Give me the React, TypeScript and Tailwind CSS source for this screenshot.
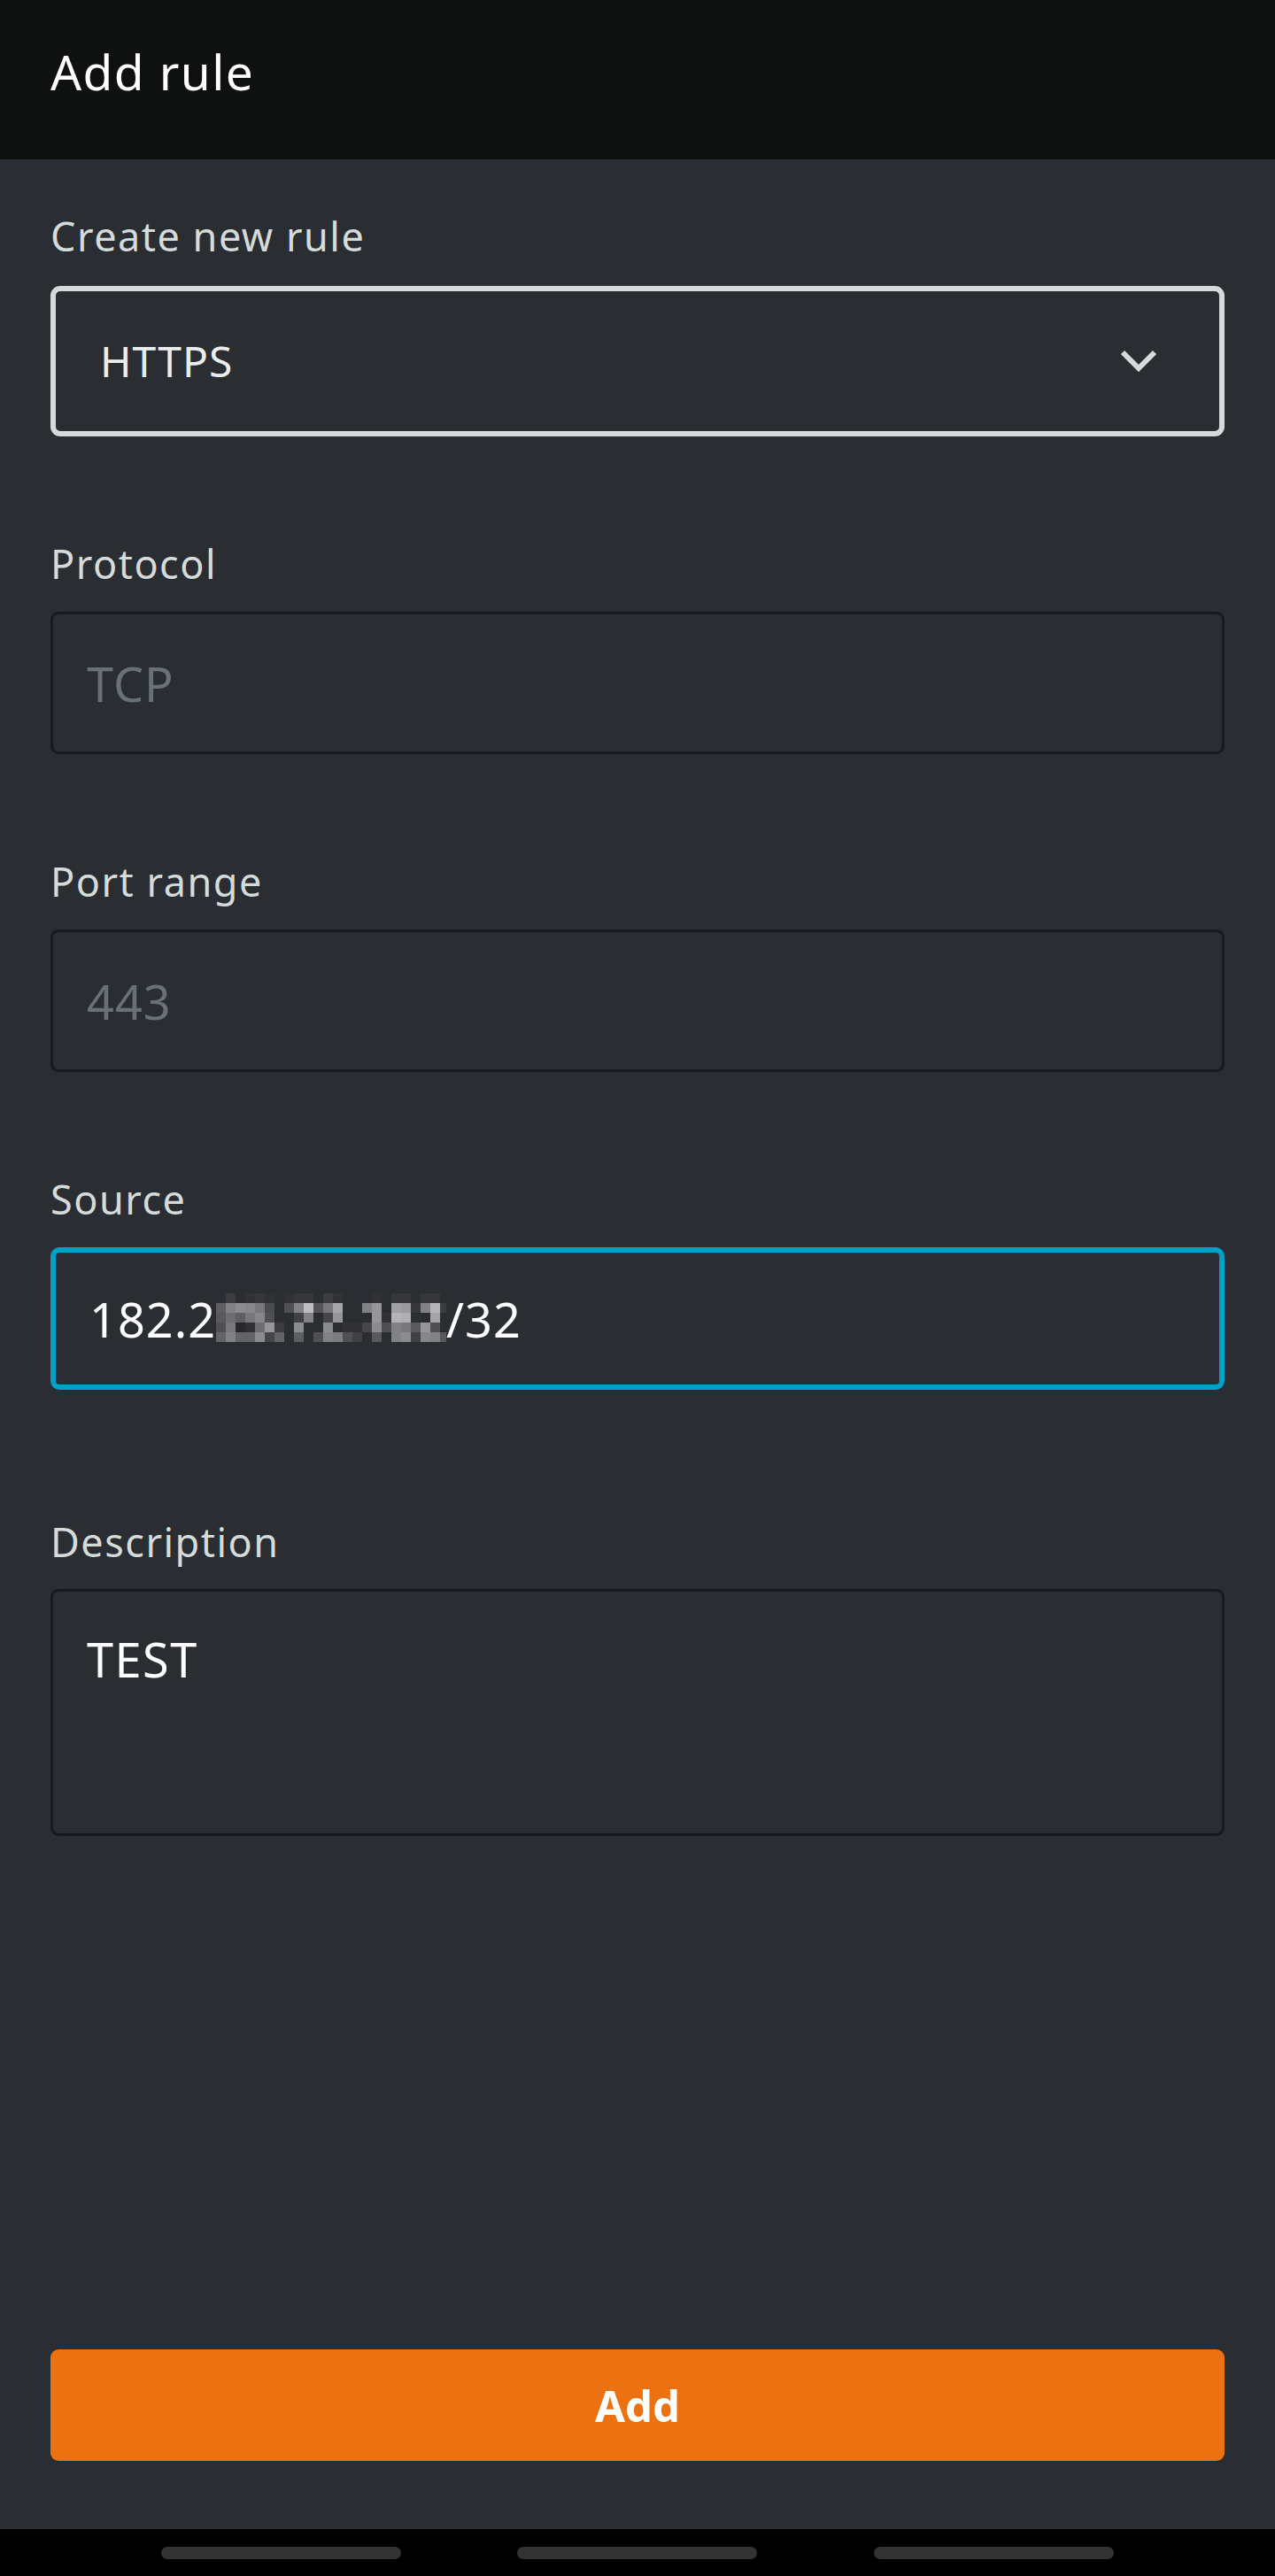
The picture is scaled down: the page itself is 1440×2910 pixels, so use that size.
import React from 'react';

// pixelated part of the source address (gray levels, 0 = background)
const mosaic: number[][] = [
  [0, 60, 0, 50, 55, 50, 0, 50, 55, 55, 0, 60, 50, 0, 0, 0, 50, 0, 55, 55, 0, 55, 55, 0],
  [95, 130, 140, 135, 120, 75, 0, 80, 130, 190, 85, 120, 165, 0, 0, 130, 150, 0, 160, 155, 55, 130, 180, 60],
  [90, 110, 95, 120, 135, 80, 0, 0, 65, 130, 0, 70, 150, 0, 0, 0, 150, 50, 180, 175, 0, 0, 165, 0],
  [80, 120, 40, 50, 110, 150, 60, 0, 140, 0, 0, 140, 0, 50, 50, 70, 140, 80, 130, 120, 90, 150, 80, 0],
  [100, 130, 100, 100, 140, 70, 100, 0, 95, 0, 80, 130, 125, 80, 65, 0, 90, 0, 130, 140, 65, 135, 130, 90],
];

function Label({ children, top }: { children: React.ReactNode; top: string }) {
  return (
    <div className={`${top} text-[45px] leading-none tracking-[1.5px] text-[#d5dbdb]`}>{children}</div>
  );
}

function Field({ value, muted }: { value: React.ReactNode; muted?: boolean }) {
  return (
    <div
      className={`mt-[32px] h-[161px] flex items-center pl-[38px] border-[3px] border-[#16191f] rounded-[9px] text-[54px] leading-none tracking-[1px] ${
        muted ? 'text-[#687078]' : 'text-white'
      }`}
    >
      {value}
    </div>
  );
}

export default function App() {
  return (
    <div className="w-[1440px] h-[2910px] flex flex-col bg-[#2a2d32] font-['Noto_Sans',sans-serif]">
      {/* Header */}
      <div className="h-[180px] shrink-0 bg-[#0f1111] px-[57px] pt-[53px]">
        <div className="text-[55px] leading-none tracking-[1.4px] text-white">Add rule</div>
      </div>

      {/* Form */}
      <div className="flex-1 px-[57px] pt-[64px]">
        <Label top="mt-0">Create new rule</Label>
        <div className="mt-[34px] h-[170px] flex items-center justify-between pl-[50px] pr-[68px] border-[6px] border-[#d5dbdb] rounded-[11px]">
          <span className="text-[48px] leading-none tracking-[1px] text-[#eaeded]">HTTPS</span>
          <svg width="46" height="30" viewBox="0 0 46 30" fill="none">
            <polyline points="5,5 23,23 41,5" stroke="#d5dbdb" strokeWidth="6" />
          </svg>
        </div>

        <Label top="mt-[121px]">Protocol</Label>
        <Field value="TCP" muted />

        <Label top="mt-[121px]">Port range</Label>
        <Field value="443" muted />

        <Label top="mt-[121px]">Source</Label>
        <div className="mt-[32px] h-[161px] flex items-center pl-[38px] border-[6px] border-[#00a1c9] rounded-[10px] text-[54px] leading-none tracking-[1px] text-white">
          <span>182.2</span>
          <div className="flex flex-col mt-[-3px]">
            {mosaic.map((row, r) => (
              <div key={r} className="flex">
                {row.map((v, c) => (
                  <div
                    key={c}
                    className={`h-[11px] ${c === row.length - 1 ? 'w-[7px]' : 'w-[11px]'}`}
                    style={{ backgroundColor: v ? `rgb(${v},${v},${v + 4})` : 'transparent' }}
                  />
                ))}
              </div>
            ))}
          </div>
          <span>/32</span>
        </div>

        <Label top="mt-[149px]">Description</Label>
        <div className="mt-[31px] h-[279px] pl-[38px] pt-[49px] border-[3px] border-[#16191f] rounded-[9px] text-[54px] leading-none tracking-[1.5px] text-white">
          TEST
        </div>
      </div>

      {/* Action */}
      <div className="px-[57px] pb-[77px]">
        <button className="w-full h-[126px] rounded-[9px] bg-[#ec7211] text-white text-[49px] font-bold leading-none">
          Add
        </button>
      </div>

      {/* System nav */}
      <div className="h-[53px] shrink-0 bg-black flex items-start pt-[20px]">
        <div className="w-[271px] h-[14px] rounded-full bg-[#333333] ml-[182px]" />
        <div className="w-[271px] h-[14px] rounded-full bg-[#333333] ml-[131px]" />
        <div className="w-[271px] h-[14px] rounded-full bg-[#333333] ml-[132px]" />
      </div>
    </div>
  );
}
